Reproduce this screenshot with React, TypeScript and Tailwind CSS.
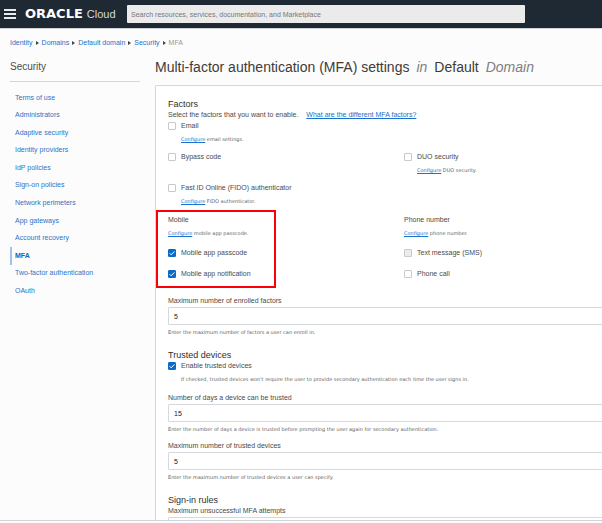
import type { ReactNode } from 'react';

const navItems = [
  'Terms of use',
  'Administrators',
  'Adaptive security',
  'Identity providers',
  'IdP policies',
  'Sign-on policies',
  'Network perimeters',
  'App gateways',
  'Account recovery',
  'MFA',
  'Two-factor authentication',
  'OAuth',
];

const crumbs = ['Identity', 'Domains', 'Default domain', 'Security'];

function Check({
  id,
  label,
  checked = false,
  disabled = false,
}: {
  id: string;
  label: string;
  checked?: boolean;
  disabled?: boolean;
}) {
  return (
    <div className="flex h-[10px] items-center gap-[5px]">
      <span className="relative flex size-2 shrink-0">
        <input
          id={id}
          type="checkbox"
          defaultChecked={checked}
          disabled={disabled}
          className="peer size-2 appearance-none rounded-[1px] border border-[#c6cacf] bg-white checked:border-[#0b6bc9] checked:bg-[#0b6bc9] disabled:bg-[#ececee]"
        />
        <svg
          viewBox="0 0 8 8"
          className="pointer-events-none absolute inset-0 hidden size-2 peer-checked:block"
          fill="none"
          stroke="white"
          strokeWidth="1"
        >
          <path d="M1.6 4.2 3.2 5.8 6.4 2.4" />
        </svg>
      </span>
      <label htmlFor={id} className="leading-[10px]">
        {label}
      </label>
    </div>
  );
}

function Hint({ children, indent = false }: { children: ReactNode; indent?: boolean }) {
  return (
    <p
      className={`whitespace-nowrap font-['DejaVu_Sans',sans-serif] text-[5px] leading-[8px] text-[#5f5f5f] ${indent ? 'pl-[13px]' : ''}`}
    >
      {children}
    </p>
  );
}

function Configure() {
  return (
    <a href="#configure" className="text-[#1a73cf] underline">
      Configure
    </a>
  );
}

function Field({ id, label, value, hint }: { id: string; label: string; value: string; hint?: string }) {
  return (
    <div className="flex flex-col">
      <label htmlFor={id} className="mb-px leading-[10px]">
        {label}
      </label>
      <input
        id={id}
        defaultValue={value}
        className="h-[18px] w-full rounded-[1px] border border-[#d5d8dd] bg-white px-[5px] text-[7px] text-[#222]"
      />
      {hint && (
        <div className="mt-[3px]">
          <Hint>{hint}</Hint>
        </div>
      )}
    </div>
  );
}

function Heading({ children }: { children: ReactNode }) {
  return <h2 className="text-[9px] leading-[12px] text-[#2f2f2f]">{children}</h2>;
}

export default function App() {
  return (
    <div className="flex h-screen flex-col overflow-hidden bg-[#fcfcfc] font-['Liberation_Sans',Arial,sans-serif] text-[7px] text-[#4a4a4a]">
      <header className="flex h-[29px] shrink-0 items-center border-b border-[#cfd3d6] bg-[#1e2933] pl-1">
        <button aria-label="Open navigation" className="flex w-3 flex-col gap-[2px]">
          <span className="h-[2px] bg-[#e8eaec]" />
          <span className="h-[2px] bg-[#e8eaec]" />
          <span className="h-[2px] bg-[#e8eaec]" />
        </button>
        <div className="flex w-[111px] shrink-0 items-baseline gap-1 pl-[9px] leading-[14px] text-white">
          <span className="font-['DejaVu_Sans',sans-serif] text-[13px] font-bold">ORACLE</span>
          <span className="text-[11px] text-[#d5d9dc]">Cloud</span>
        </div>
        <input
          aria-label="Search"
          placeholder="Search resources, services, documentation, and Marketplace"
          className="mr-[77px] h-[18px] min-w-0 flex-1 rounded-[1px] bg-[#ebebeb] px-1 text-[7px] placeholder:text-[#777]"
        />
      </header>

      <nav aria-label="Breadcrumb" className="flex h-[28px] shrink-0 items-center gap-[3px] pl-[10px]">
        {crumbs.map((c) => (
          <span key={c} className="flex items-center gap-[3px]">
            <a href="#crumb" className="text-[#2272cc]">
              {c}
            </a>
            <svg viewBox="0 0 3 4" className="h-1 w-[3px] fill-[#444]">
              <path d="M0 0 3 2 0 4Z" />
            </svg>
          </span>
        ))}
        <span className="text-[#9a9a9a]">MFA</span>
      </nav>

      <div className="flex min-h-0 flex-1 pl-[10px]">
        <aside className="mr-[15px] w-[130px] shrink-0">
          <h2 className="h-[25px] border-b border-[#d6d6d6] text-[10px] leading-[20px] text-[#4d4d4d]">Security</h2>
          <ul className="mt-[7px] flex h-[211px] flex-col">
            {navItems.map((item) => (
              <li
                key={item}
                className={`flex flex-1 items-center border-l-2 pl-[3px] ${
                  item === 'MFA' ? 'border-[#9cc4ec] font-bold text-[#1263bb]' : 'border-transparent text-[#2b74c6]'
                }`}
              >
                <a href="#nav">{item}</a>
              </li>
            ))}
          </ul>
        </aside>

        <main className="flex min-w-0 flex-1 flex-col overflow-hidden">
          <h1 className="flex h-[28px] shrink-0 gap-[7px] whitespace-nowrap text-[14px] leading-[20px] text-[#3f3b38]">
            <span>Multi-factor authentication (MFA) settings</span>
            <i className="text-[#808080]">in</i>
            <span>Default</span>
            <i className="text-[#808080]">Domain</i>
          </h1>

          <section className="-mr-[38px] shrink-0 rounded-tl-[2px] border-t border-l border-[#d3d7dc] bg-white pt-[12px] pl-[12px]">
            <Heading>Factors</Heading>
            <p className="leading-[10px]">
              Select the factors that you want to enable.
              <a href="#factors" className="ml-[8px] text-[#1a6fca] underline">
                What are the different MFA factors?
              </a>
            </p>

            <div className="mt-px grid grid-cols-2 gap-y-[9px]">
              <div className="col-span-2 flex flex-col gap-1">
                <Check id="email" label="Email" />
                <Hint indent>
                  <Configure /> email settings.
                </Hint>
              </div>
              <Check id="bypass" label="Bypass code" />
              <div className="flex flex-col gap-1">
                <Check id="duo" label="DUO security" />
                <Hint indent>
                  <Configure /> DUO security.
                </Hint>
              </div>
              <div className="col-span-2 flex flex-col gap-1">
                <Check id="fido" label="Fast ID Online (FIDO) authenticator" />
                <Hint indent>
                  <Configure /> FIDO authenticator.
                </Hint>
              </div>
              <div className="relative flex flex-col gap-[11px] pt-px">
                <div className="flex flex-col gap-1">
                  <h3 className="leading-[10px]">Mobile</h3>
                  <Hint>
                    <Configure /> mobile app passcode.
                  </Hint>
                </div>
                <Check id="passcode" label="Mobile app passcode" checked />
                <Check id="notification" label="Mobile app notification" checked />
                <div className="pointer-events-none absolute -top-[4px] -bottom-[9px] -left-[12px] w-[120px] border-2 border-[#fb0007]" />
              </div>
              <div className="flex flex-col gap-[11px] pt-px">
                <div className="flex flex-col gap-1">
                  <h3 className="leading-[10px]">Phone number</h3>
                  <Hint>
                    <Configure /> phone number.
                  </Hint>
                </div>
                <Check id="sms" label="Text message (SMS)" disabled />
                <Check id="call" label="Phone call" />
              </div>
            </div>

            <div className="mt-[17px]">
              <Field
                id="max-factors"
                label="Maximum number of enrolled factors"
                value="5"
                hint="Enter the maximum number of factors a user can enroll in."
              />
            </div>

            <div className="mt-[13px] flex flex-col">
              <Heading>Trusted devices</Heading>
              <Check id="trusted" label="Enable trusted devices" checked />
              <div className="mt-1">
                <Hint indent>
                  If checked, trusted devices won't require the user to provide secondary authentication each time the
                  user signs in.
                </Hint>
              </div>
              <div className="mt-[10px] flex flex-col gap-2">
                <Field
                  id="trusted-days"
                  label="Number of days a device can be trusted"
                  value="15"
                  hint="Enter the number of days a device is trusted before prompting the user again for secondary authentication."
                />
                <Field
                  id="max-trusted"
                  label="Maximum number of trusted devices"
                  value="5"
                  hint="Enter the maximum number of trusted devices a user can specify."
                />
              </div>
            </div>

            <div className="mt-[13px]">
              <Heading>Sign-in rules</Heading>
              <Field id="max-attempts" label="Maximum unsuccessful MFA attempts" value="" />
            </div>
          </section>
        </main>
      </div>
      <footer className="h-[3px] shrink-0 border-t border-[#cfd3d8] bg-[#fcfcfc]" />
    </div>
  );
}
